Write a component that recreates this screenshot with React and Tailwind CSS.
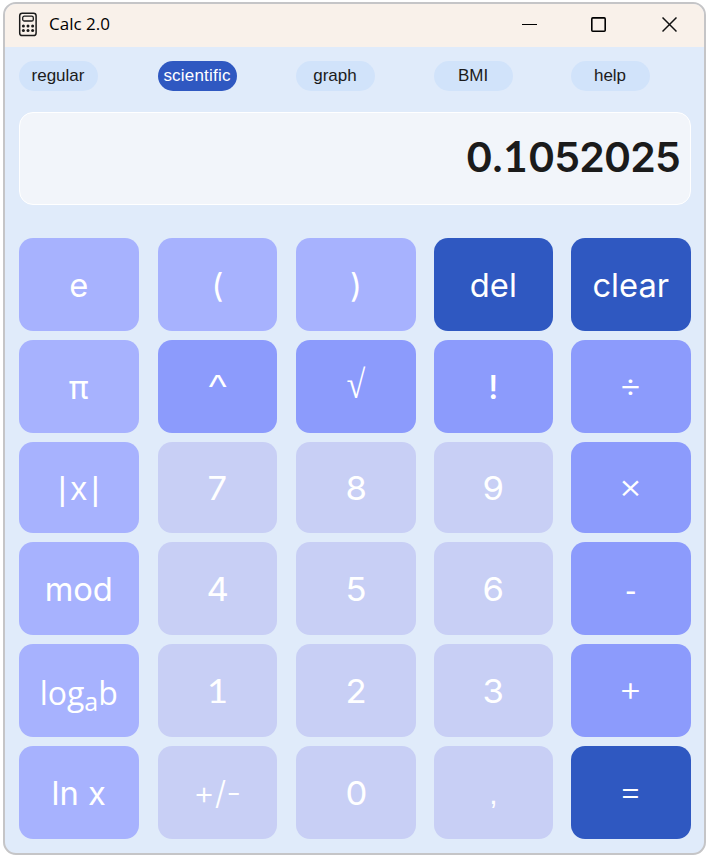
const tones = {
  soft: 'bg-[#a7b2fe]',
  mid: 'bg-[#8c9bfc]',
  pale: 'bg-[#c8cff5]',
  deep: 'bg-[#2f58c1]',
};

const sans = "font-['Inter',sans-serif] font-normal text-[32.7px] translate-y-[0.5px]";
const symbol = "font-['Inter',sans-serif] font-[340] text-[32px] scale-x-[1.14] scale-y-[1.08] translate-y-[-2px]";
const digit = "font-['Inter',sans-serif] font-normal text-[33px] translate-y-[0.5px] scale-x-[1.05]";
const one = "font-['Lato',sans-serif] text-[33px] scale-x-110";

const columnWidths = ['w-[119.5px]', 'w-[118.7px]', 'w-[120px]', 'w-[118.7px]', 'w-[119.5px]'];

const LogLabel = () => (
  <>
    log<span className="relative top-[6px] text-[25px] font-normal">a</span>b
  </>
);

const keys = [
  ['e', 'soft'], ['(', 'soft'], [')', 'soft'], ['del', 'deep'], ['clear', 'deep'],
  ['π', 'soft'], ['^', 'mid', "font-['Liberation_Sans',sans-serif] text-[33px] scale-x-[1.15]"],
  ['√', 'mid', "font-['Liberation_Serif',serif] text-[36px] scale-x-[0.95] scale-y-[1.1] translate-y-[-2px]"], ['!', 'mid', "font-['Inter',sans-serif] font-medium text-[33px] translate-y-[0.5px]"], ['÷', 'mid', symbol],
  ['|x|', 'soft', "font-['Liberation_Sans',sans-serif] text-[33px] translate-y-[1px] tracking-[4px] pl-[4px]"], ['7', 'pale', digit], ['8', 'pale', digit], ['9', 'pale', digit], ['×', 'mid', symbol],
  ['mod', 'soft'], ['4', 'pale', digit], ['5', 'pale', digit], ['6', 'pale', digit], ['-', 'mid', "font-['Liberation_Sans',sans-serif] text-[33px] translate-y-[2px]"],
  [<LogLabel />, 'soft', "font-['Open_Sans',sans-serif] text-[32px] translate-y-[1.5px]"], ['1', 'pale', one], ['2', 'pale', digit], ['3', 'pale', digit], ['+', 'mid', symbol],
  ['ln x', 'soft'], ['+/-', 'pale', "font-['Inter',sans-serif] font-[340] text-[32px] scale-x-[1.03]"], ['0', 'pale', digit],
  [',', 'pale', "font-['Liberation_Sans',sans-serif] text-[30px] translate-y-[1px]"], ['=', 'deep', symbol],
];

const tabs = ['regular', 'scientific', 'graph', 'BMI', 'help'];

function CalculatorIcon() {
  return (
    <svg width="20" height="26" viewBox="0 0 20 26" fill="none" stroke="#1b1b1b">
      <rect x="1.7" y="1.2" width="16.4" height="22.4" rx="2.6" strokeWidth="1.5" />
      <rect x="4.7" y="4.2" width="10.6" height="4.8" rx="1.6" strokeWidth="1.3" />
      <g fill="#1b1b1b" stroke="none">
        {[14, 18.5].map((y) => [5.4, 10, 14.6].map((x) => <circle key={`${x}-${y}`} cx={x} cy={y} r="1.5" />))}
      </g>
    </svg>
  );
}

export default function App() {
  return (
    <div className="h-[857px] w-[708px] bg-white pl-[3px] pt-[2px]">
      <div className="h-[853px] w-[703px] overflow-hidden rounded-[13px] border-2 border-[#c5c5c7] bg-[#e0ebfa]">
        <header className="flex h-[43px] items-center bg-[#f9f1ea] pb-[2px] pl-[13px]">
          <CalculatorIcon />
          <h1 className="ml-[11px] flex-1 pb-[2px] font-['Open_Sans',sans-serif] text-[17px] leading-none text-black">Calc 2.0</h1>
          <div className="flex items-center gap-[54px] pr-[27px]">
            <svg width="15" height="16" viewBox="0 0 15 16" className="shrink-0">
              <path d="M0 7.5H15" stroke="#000" />
            </svg>
            <svg width="15" height="16" viewBox="0 0 15 16" fill="none" className="shrink-0">
              <rect x=".8" y=".9" width="13.4" height="13.4" rx="1" stroke="#000" strokeWidth="1.6" />
            </svg>
            <svg width="15" height="16" viewBox="0 0 15 16" className="ml-[2px] shrink-0">
              <path d="M.5 .5L14.5 14.5M14.5 .5L.5 14.5" stroke="#111" strokeWidth="1.5" />
            </svg>
          </div>
        </header>

        <main className="px-[14px] pt-[14px]">
          <nav className="grid grid-cols-[139px_138px_138px_137px_120px]">
            {tabs.map((tab) => (
              <button
                key={tab}
                className={`flex h-[29.5px] w-[79px] items-center justify-center rounded-full pr-[1px] font-['Liberation_Sans',sans-serif] text-[17px] leading-none ${
                  tab === 'scientific' ? 'bg-[#2f58c1] tracking-[0.2px] text-white' : 'bg-[#d1e3fa] text-[#1b1b1b]'
                }`}
              >
                {tab}
              </button>
            ))}
          </nav>

          <output className="mt-[21.5px] flex h-[93px] w-[672px] items-center justify-end rounded-[14px] border-[1.5px] border-white bg-[#f2f5fa] pb-[4px] pr-[10px] font-['Inter',sans-serif] text-[41px] font-semibold leading-none tracking-[-0.8px] text-[#1b1b1b]">
            <span>
              0.<span className="font-['Lato',sans-serif] text-[42px] font-bold tracking-[0.5px]">1</span>052025
            </span>
          </output>

          <div className="mt-[33px] grid grid-cols-[139px_138px_138px_137px_120px] grid-rows-[93px_93px_91px_93px_93px_93px] gap-y-[9px]">
            {keys.map(([label, tone, type = sans], i) => (
              <button
                key={i}
                className={`flex items-center justify-center rounded-[14px] leading-none text-white ${tones[tone]} ${columnWidths[i % 5]}`}
              >
                <span className={`whitespace-pre leading-none ${type}`}>{label}</span>
              </button>
            ))}
          </div>
        </main>
      </div>
    </div>
  );
}
